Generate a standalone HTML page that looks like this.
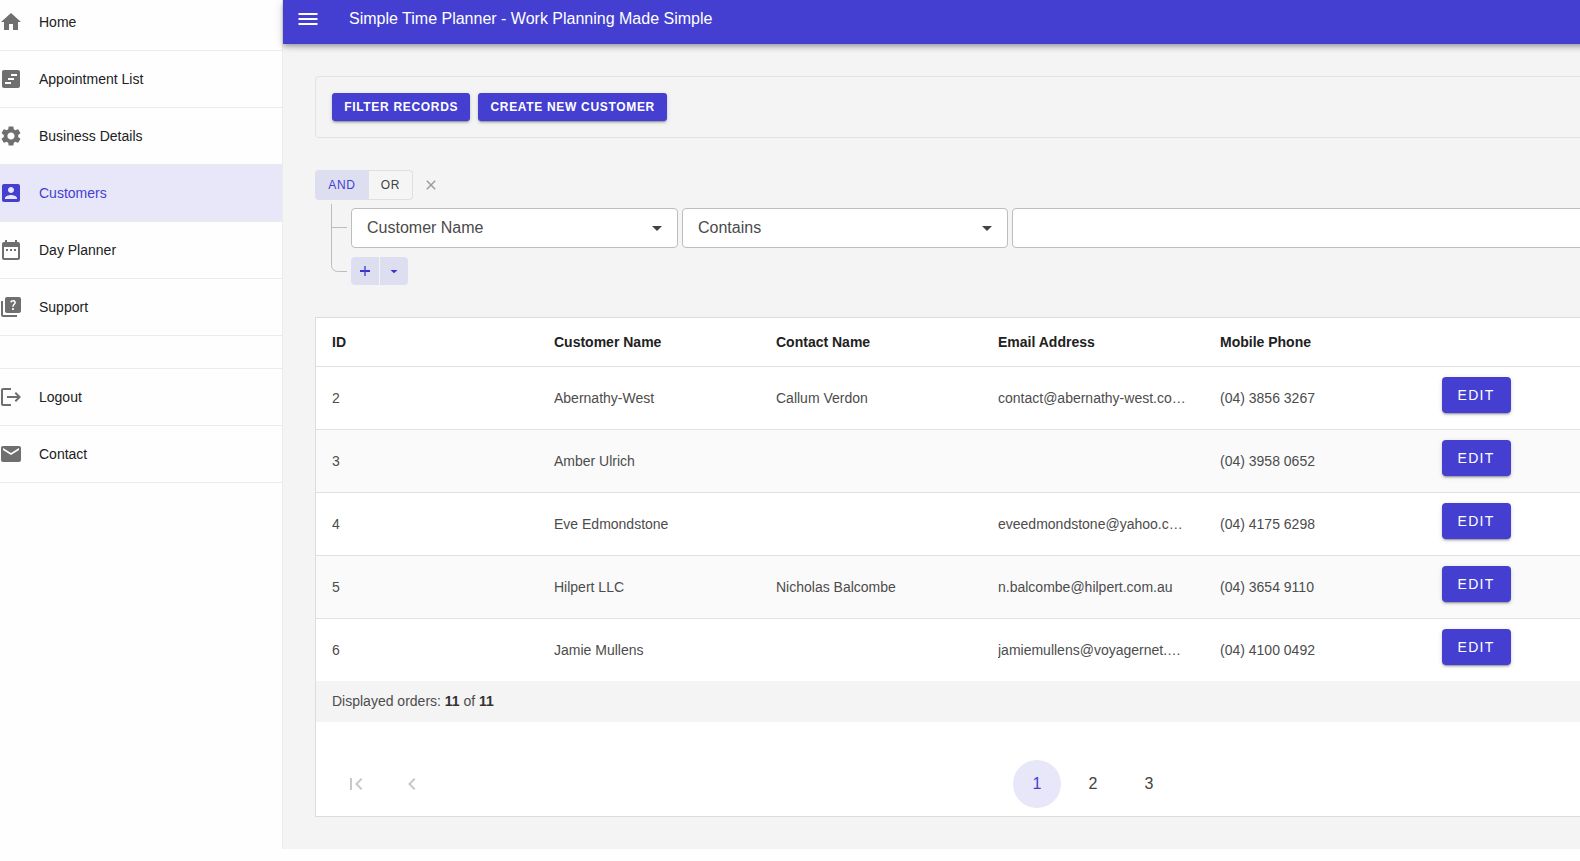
<!DOCTYPE html>
<html lang="en">
<head>
<meta charset="utf-8">
<title>Simple Time Planner</title>
<style>
*{box-sizing:border-box;margin:0;padding:0}
html,body{width:1580px;height:861px;overflow:hidden;background:#fefefe;font-family:"Liberation Sans",sans-serif;color:#212121}
.abs{position:absolute}
#main{position:absolute;left:283px;top:0;width:1297px;height:849px;background:#f4f4f4}
#side{position:absolute;left:0;top:0;width:283px;height:861px;background:#fefefe}
#sideborder{position:absolute;left:282px;top:0;width:1px;height:849px;background:#ececec}
.nav{position:absolute;left:0;width:282px;height:57px;border-bottom:1px solid #ebebeb;font-size:14px;color:#212121}
.nav span{position:absolute;left:39px;top:20px;line-height:16px;white-space:nowrap}
.nav svg{position:absolute;left:-1px;top:16px;width:24px;height:24px;fill:#6f6f6f}
.nav.sel{background:#e8e7f9;color:#443fd1}
.nav.sel svg{fill:#443fd1}
#hdr{position:absolute;left:283px;top:0;width:1400px;height:44px;background:#443fd1;box-shadow:0 2px 4px -1px rgba(0,0,0,.2),0 4px 5px 0 rgba(0,0,0,.14),0 1px 10px 0 rgba(0,0,0,.12)}
#hdr .t{position:absolute;left:66px;top:9px;font-size:16px;line-height:20px;color:#fff;white-space:nowrap;letter-spacing:0px}
.bar{position:absolute;left:16px;width:18px;height:2px;background:#fff}
#card{position:absolute;left:315px;top:76px;width:1300px;height:62px;border:1px solid #e2e2e2;border-radius:4px;background:#f4f4f4}
.btn{position:absolute;background:#443fd1;color:#fff;font-weight:bold;border-radius:3px;white-space:nowrap;text-align:center;box-shadow:0 3px 1px -2px rgba(0,0,0,.2),0 2px 2px 0 rgba(0,0,0,.14),0 1px 5px 0 rgba(0,0,0,.12)}
.btn.top{top:93px;height:28px;font-size:12px;line-height:28px;letter-spacing:.68px;text-indent:.4px}

/* query builder */
.qb{position:absolute;top:170px;height:30px;font-size:12px;line-height:30px;text-align:center;letter-spacing:.7px}
#qand{left:315px;width:54px;background:#dedef1;color:#443fd1;border-radius:4px 0 0 4px}
#qor{left:369px;width:44px;background:#f5f5f5;color:#424242;border:1px solid #e0e0e0;border-left:none;border-radius:0 4px 4px 0;line-height:28px}
.sbox{position:absolute;top:208px;height:40px;background:#fff;border:1px solid #bdbdbd;border-radius:4px;font-size:16px;color:#4a4a4a;line-height:38px;padding-left:15px;white-space:nowrap}
.sbox svg{position:absolute;right:8px;top:7px;width:24px;height:24px;fill:#424242}
.pm{position:absolute;top:257px;width:28px;height:28px;background:#dedef1}
/* table */
#tbl{position:absolute;left:315px;top:317px;width:1300px;height:500px;background:#fff;border:1px solid #dcdcdc}
.row{position:absolute;left:316px;width:1264px;height:63px;border-bottom:1px solid #e0e0e0;background:#fff;font-size:14px;color:#4c4c4c}
.row.alt{background:#fafafa}
.row.hd{height:49px;color:#212121;font-weight:bold}
.c{position:absolute;top:23px;width:190px;line-height:16px;white-space:nowrap;overflow:hidden;text-overflow:ellipsis}
.hd .c{top:16px}
.c1{left:16px}.c2{left:238px}.c3{left:460px}.c4{left:682px}.c5{left:904px}
.edit{position:absolute;left:1126px;top:10px;width:69px;height:36px;background:#443fd1;color:#fff;border-radius:4px;font-size:14px;line-height:37px;text-align:center;letter-spacing:1.25px;text-indent:-1px;box-shadow:0 3px 1px -2px rgba(0,0,0,.2),0 2px 2px 0 rgba(0,0,0,.14),0 1px 5px 0 rgba(0,0,0,.12)}
#foot{position:absolute;left:316px;top:681px;width:1264px;height:41px;background:#f4f4f4;font-size:14px;color:#4c4c4c;line-height:16px}
#foot span{position:absolute;left:16px;top:12px;white-space:nowrap}
#foot b{color:#333}
.pg{position:absolute;top:760px;width:48px;height:48px;border-radius:50%;font-size:16px;line-height:48px;text-align:center;color:#424242}
.pg.on{background:#e8e7f9;color:#443fd1}
.pi{position:absolute;top:772px;width:24px;height:24px;fill:#c8c8c8}
</style>
</head>
<body>
<div id="main"></div>
<div id="side"></div>
<div id="sideborder"></div>

<!-- header -->
<div id="hdr">
  <svg class="abs" style="left:12px;top:8px;width:26px;height:22px" viewBox="0 0 26 22"><path d="M3.5 5h19v2h-19zM3.5 10h19v2h-19zM3.5 15h19v2h-19z" fill="#fff"/></svg>
  <div class="t">Simple Time Planner - Work Planning Made Simple</div>
</div>

<!-- toolbar card -->
<div id="card"></div>
<div class="btn top" style="left:332px;width:138px">FILTER RECORDS</div>
<div class="btn top" style="left:478px;width:189px">CREATE NEW CUSTOMER</div>

<!-- sidebar nav -->
<div class="nav" style="top:-6px"><svg viewBox="0 0 24 24"><path d="M10 20v-6h4v6h5v-8h3L12 3 2 12h3v8z"/></svg><span>Home</span></div>
<div class="nav" style="top:51px"><svg viewBox="0 0 24 24"><path d="M19,3H5C3.9,3,3,3.9,3,5v14c0,1.1,0.9,2,2,2h14c1.1,0,2-0.9,2-2V5C21,3.9,20.1,3,19,3z M12,17H6v-2h6V17z M15,13H9v-2h6V13z M18,9h-6V7h6V9z"/></svg><span>Appointment List</span></div>
<div class="nav" style="top:108px"><svg viewBox="0 0 24 24"><path d="M19.14,12.94c0.04-0.3,0.06-0.61,0.06-0.94c0-0.32-0.02-0.64-0.07-0.94l2.03-1.58c0.18-0.14,0.23-0.41,0.12-0.61 l-1.92-3.32c-0.12-0.22-0.37-0.29-0.59-0.22l-2.39,0.96c-0.5-0.38-1.03-0.7-1.62-0.94L14.4,2.81c-0.04-0.24-0.24-0.41-0.48-0.41 h-3.84c-0.24,0-0.43,0.17-0.47,0.41L9.25,5.35C8.66,5.59,8.12,5.92,7.63,6.29L5.24,5.33c-0.22-0.08-0.47,0-0.59,0.22L2.74,8.87 C2.62,9.08,2.66,9.34,2.86,9.48l2.03,1.58C4.84,11.36,4.8,11.69,4.8,12s0.02,0.64,0.07,0.94l-2.03,1.58 c-0.18,0.14-0.23,0.41-0.12,0.61l1.92,3.32c0.12,0.22,0.37,0.29,0.59,0.22l2.39-0.96c0.5,0.38,1.03,0.7,1.62,0.94l0.36,2.54 c0.05,0.24,0.24,0.41,0.48,0.41h3.84c0.24,0,0.44-0.17,0.47-0.41l0.36-2.54c0.59-0.24,1.13-0.56,1.62-0.94l2.39,0.96 c0.22,0.08,0.47,0,0.59-0.22l1.92-3.32c0.12-0.22,0.07-0.47-0.12-0.61L19.14,12.94z M12,15.6c-1.98,0-3.6-1.62-3.6-3.6 s1.62-3.6,3.6-3.6s3.6,1.62,3.6,3.6S13.98,15.6,12,15.6z"/></svg><span>Business Details</span></div>
<div class="nav sel" style="top:165px"><svg viewBox="0 0 24 24"><path d="M3 5v14c0 1.1.89 2 2 2h14c1.1 0 2-.9 2-2V5c0-1.1-.9-2-2-2H5c-1.11 0-2 .9-2 2zm12 4c0 1.66-1.34 3-3 3s-3-1.34-3-3 1.34-3 3-3 3 1.34 3 3zm-9 8c0-2 4-3.1 6-3.1s6 1.1 6 3.1v1H6v-1z"/></svg><span>Customers</span></div>
<div class="nav" style="top:222px"><svg viewBox="0 0 24 24"><path d="M9 11H7v2h2v-2zm4 0h-2v2h2v-2zm4 0h-2v2h2v-2zm2-7h-1V2h-2v2H8V2H6v2H5c-1.11 0-1.99.9-1.99 2L3 20c0 1.1.89 2 2 2h14c1.1 0 2-.9 2-2V6c0-1.1-.9-2-2-2zm0 16H5V9h14v11z"/></svg><span>Day Planner</span></div>
<div class="nav" style="top:279px"><svg viewBox="0 0 24 24"><path d="M4,6H2v14c0,1.1,0.9,2,2,2h14v-2H4V6z M20,2H8C6.9,2,6,2.9,6,4v12c0,1.1,0.9,2,2,2h12c1.1,0,2-0.9,2-2V4 C22,2.9,21.1,2,20,2z M14.01,15 c-0.59,0-1.05-0.47-1.05-1.05c0-0.59,0.47-1.04,1.05-1.04c0.59,0,1.04,0.45,1.04,1.04 C15.04,14.53,14.6,15,14.01,15z M16.51,8.83c-0.63,0.93-1.23,1.21-1.56,1.81c-0.13,0.24-0.18,0.4-0.18,1.18h-1.52 c0-0.41-0.06-1.08,0.26-1.65c0.41-0.73,1.18-1.16,1.63-1.8c0.48-0.68,0.21-1.94-1.14-1.94c-0.88,0-1.32,0.67-1.5,1.23l-1.37-0.57 C11.51,5.96,12.52,5,13.99,5c1.23,0,2.08,0.56,2.51,1.26C16.87,6.87,17.08,7.99,16.51,8.83z"/></svg><span>Support</span></div>
<div class="nav" style="top:336px;height:33px"></div>
<div class="nav" style="top:369px"><svg viewBox="0 0 24 24"><path d="M17 7l-1.41 1.41L18.17 11H8v2h10.17l-2.58 2.58L17 17l5-5zM4 5h8V3H4c-1.1 0-2 .9-2 2v14c0 1.1.9 2 2 2h8v-2H4V5z"/></svg><span>Logout</span></div>
<div class="nav" style="top:426px"><svg viewBox="0 0 24 24"><path d="M20 4H4c-1.1 0-1.99.9-1.99 2L2 18c0 1.1.9 2 2 2h16c1.1 0 2-.9 2-2V6c0-1.1-.9-2-2-2zm0 4l-8 5-8-5V6l8 5 8-5v2z"/></svg><span>Contact</span></div>
<!--NAVEND-->
<!-- query builder -->
<div class="qb" id="qand">AND</div>
<div class="qb" id="qor">OR</div>
<svg class="abs" style="left:424px;top:178px;width:14px;height:14px" viewBox="0 0 14 14"><path d="M2.8 2.8l8.4 8.4M11.2 2.8l-8.4 8.4" stroke="#9a9a9a" stroke-width="1.4" fill="none"/></svg>
<svg class="abs" style="left:330px;top:203px;width:20px;height:72px" viewBox="0 0 20 72"><path d="M1.5 1V62.5a6 6 0 0 0 6 6H17M1.5 24.5H17" stroke="#bdbdbd" stroke-width="1" fill="none"/></svg>
<div class="sbox" style="left:351px;width:327px">Customer Name<svg viewBox="0 0 24 24"><path d="M7 10l5 5 5-5z"/></svg></div>
<div class="sbox" style="left:682px;width:326px">Contains<svg viewBox="0 0 24 24"><path d="M7 10l5 5 5-5z"/></svg></div>
<div class="sbox" style="left:1012px;width:600px"></div>
<div class="pm" style="left:351px;border-radius:4px 0 0 4px"><svg class="abs" style="left:8px;top:8px;width:12px;height:12px" viewBox="0 0 12 12"><path d="M1 5h10v2H1z" fill="#3a34cf"/><path d="M5 1h2v10H5z" fill="#443fd1" opacity=".7"/></svg></div>
<div class="pm" style="left:380px;border-radius:0 4px 4px 0"><svg class="abs" style="left:9px;top:11px;width:10px;height:6px" viewBox="0 0 10 6"><path d="M1.5 2h7L5 5.2z" fill="#3a34cf"/></svg></div>

<!-- table -->
<div id="tbl"></div>
<div class="row hd" style="top:318px"><div class="c c1">ID</div><div class="c c2">Customer Name</div><div class="c c3">Contact Name</div><div class="c c4">Email Address</div><div class="c c5">Mobile Phone</div></div>
<div class="row" style="top:367px"><div class="c c1">2</div><div class="c c2">Abernathy-West</div><div class="c c3">Callum Verdon</div><div class="c c4">contact@abernathy-west.com.au</div><div class="c c5">(04) 3856 3267</div><div class="edit">EDIT</div></div>
<div class="row alt" style="top:430px"><div class="c c1">3</div><div class="c c2">Amber Ulrich</div><div class="c c3"></div><div class="c c4"></div><div class="c c5">(04) 3958 0652</div><div class="edit">EDIT</div></div>
<div class="row" style="top:493px"><div class="c c1">4</div><div class="c c2">Eve Edmondstone</div><div class="c c3"></div><div class="c c4">eveedmondstone@yahoo.com.au</div><div class="c c5">(04) 4175 6298</div><div class="edit">EDIT</div></div>
<div class="row alt" style="top:556px"><div class="c c1">5</div><div class="c c2">Hilpert LLC</div><div class="c c3">Nicholas Balcombe</div><div class="c c4">n.balcombe@hilpert.com.au</div><div class="c c5">(04) 3654 9110</div><div class="edit">EDIT</div></div>
<div class="row" style="top:619px;border-bottom:none;height:62px"><div class="c c1">6</div><div class="c c2">Jamie Mullens</div><div class="c c3"></div><div class="c c4">jamiemullens@voyagernet.com.au</div><div class="c c5">(04) 4100 0492</div><div class="edit">EDIT</div></div>
<div id="foot"><span>Displayed orders: <b>11</b> of <b>11</b></span></div>
<!-- pager -->
<svg class="pi" style="left:344px" viewBox="0 0 24 24"><path d="M18.41 16.59L13.82 12l4.59-4.59L17 6l-6 6 6 6zM6 6h2v12H6z"/></svg>
<svg class="pi" style="left:400px" viewBox="0 0 24 24"><path d="M15.41 7.41L14 6l-6 6 6 6 1.41-1.41L10.83 12z"/></svg>
<div class="pg on" style="left:1013px">1</div>
<div class="pg" style="left:1069px">2</div>
<div class="pg" style="left:1125px">3</div>

</body>
</html>
